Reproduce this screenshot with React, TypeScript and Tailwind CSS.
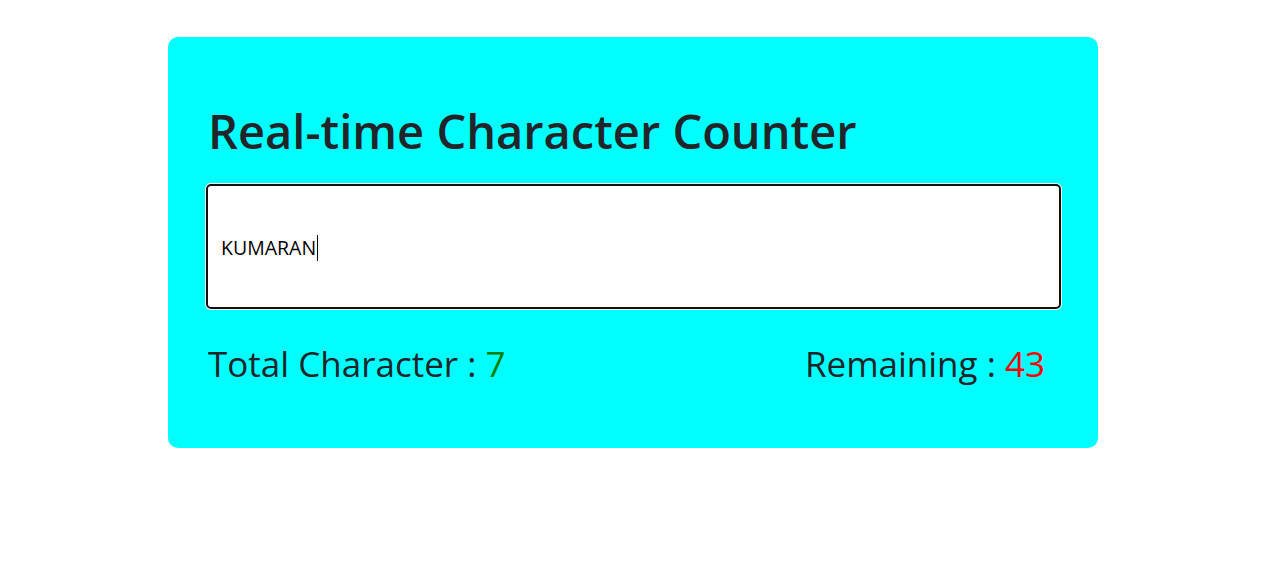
export default function App() {
  return (
    <div className="min-h-[582px] bg-white pl-[168px] pt-[37px] font-['Open_Sans',sans-serif] text-[#212529]">
      <div className="w-[930px] h-[411px] rounded-[10px] bg-[#00ffff] px-[38px] pt-[66px]">
        <h1 className="pl-[2px] text-[47px] font-semibold leading-[1.2]">Real-time Character Counter</h1>
        <div className="mt-[25px] h-[125px] w-[855px] rounded-[5px] border-2 border-[#111] bg-white shadow-[0_0_0_1px_#fff] flex items-center pl-[13px] pt-[2px]">
          <span className="text-[19.5px] text-black">KUMARAN</span>
          <span className="ml-[1px] h-[26px] w-px bg-black" />
        </div>
        <div className="mt-[34px] flex justify-between pl-[2px] pr-[15px] text-[35px] leading-[1.2]">
          <p>
            Total Character : <span className="text-[#008000]">7</span>
          </p>
          <p>
            Remaining : <span className="text-[#ff0000]">43</span>
          </p>
        </div>
      </div>
    </div>
  );
}
